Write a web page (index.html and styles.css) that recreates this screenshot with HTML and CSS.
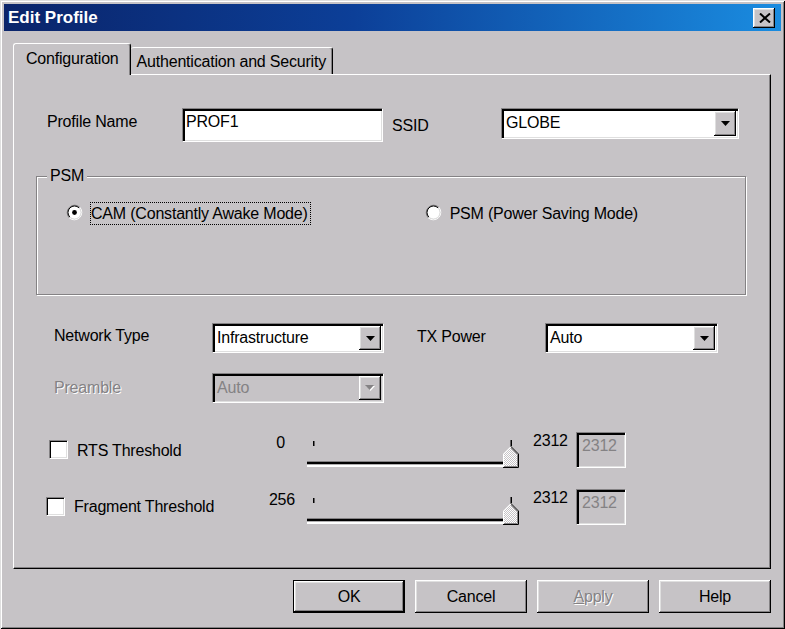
FILE: index.html
```html
<!DOCTYPE html>
<html>
<head>
<meta charset="utf-8">
<title>Edit Profile</title>
<link rel="stylesheet" href="styles.css">
</head>
<body>
<div class="window">
  <div class="titlebar">
    <span class="title">Edit Profile</span>
    <div class="close-btn">
      <svg width="12" height="10" viewBox="0 0 12 10"><path d="M1,0.5 L11,9.5 M11,0.5 L1,9.5" stroke="#000" stroke-width="2" fill="none"/></svg>
    </div>
  </div>
  <div class="client">
    <div class="tabs">
      <div class="tab tab-active">Configuration</div>
      <div class="tab tab-auth">Authentication and Security</div>
    </div>
    <div class="panel">
      <div class="row row-profile">
        <span class="lbl lbl-profile">Profile Name</span>
        <div class="field field-text">PROF1</div>
        <span class="lbl lbl-ssid">SSID</span>
        <div class="field combo combo-ssid">
          <span class="combo-text">GLOBE</span>
          <span class="combo-btn"><svg width="9" height="5" viewBox="0 0 9 5"><polygon points="0,0 9,0 4.5,5" fill="#000"/></svg></span>
        </div>
      </div>

      <fieldset class="group">
        <legend class="group-title">PSM</legend>
        <div class="radios">
          <div class="radio-item">
            <svg class="radio" width="17" height="17" viewBox="0 0 17 17">
              <circle cx="8.5" cy="8.5" r="6.5" fill="#fff"/>
              <path d="M3.2,13.8 A7.5,7.5 0 0 1 13.8,3.2" stroke="#848284" fill="none"/>
              <path d="M13.8,3.2 A7.5,7.5 0 0 1 3.2,13.8" stroke="#fff" fill="none"/>
              <path d="M3.9,13.1 A6.5,6.5 0 0 1 13.1,3.9" stroke="#000" fill="none"/>
              <path d="M13.1,3.9 A6.5,6.5 0 0 1 3.9,13.1" stroke="#dfdfdf" fill="none"/>
              <circle cx="8.5" cy="8.5" r="2.4" fill="#000"/>
            </svg>
            <span class="radio-label focus">CAM (Constantly Awake Mode)</span>
          </div>
          <div class="radio-item radio-psm">
            <svg class="radio" width="17" height="17" viewBox="0 0 17 17">
              <circle cx="8.5" cy="8.5" r="6.5" fill="#fff"/>
              <path d="M3.2,13.8 A7.5,7.5 0 0 1 13.8,3.2" stroke="#848284" fill="none"/>
              <path d="M13.8,3.2 A7.5,7.5 0 0 1 3.2,13.8" stroke="#fff" fill="none"/>
              <path d="M3.9,13.1 A6.5,6.5 0 0 1 13.1,3.9" stroke="#000" fill="none"/>
              <path d="M13.1,3.9 A6.5,6.5 0 0 1 3.9,13.1" stroke="#dfdfdf" fill="none"/>
            </svg>
            <span class="radio-label">PSM (Power Saving Mode)</span>
          </div>
        </div>
      </fieldset>

      <div class="row row-network">
        <span class="lbl lbl-network">Network Type</span>
        <div class="field combo combo-net">
          <span class="combo-text">Infrastructure</span>
          <span class="combo-btn"><svg width="9" height="5" viewBox="0 0 9 5"><polygon points="0,0 9,0 4.5,5" fill="#000"/></svg></span>
        </div>
        <span class="lbl lbl-tx">TX Power</span>
        <div class="field combo combo-tx">
          <span class="combo-text">Auto</span>
          <span class="combo-btn"><svg width="9" height="5" viewBox="0 0 9 5"><polygon points="0,0 9,0 4.5,5" fill="#000"/></svg></span>
        </div>
      </div>

      <div class="row row-preamble">
        <span class="lbl lbl-network lbl-disabled">Preamble</span>
        <div class="field combo combo-net combo-disabled">
          <span class="combo-text">Auto</span>
          <span class="combo-btn"><svg width="10" height="6" viewBox="0 0 10 6"><polygon points="1,1 10,1 5.5,6" fill="#fff"/><polygon points="0,0 9,0 4.5,5" fill="#848284"/></svg></span>
        </div>
      </div>

      <div class="row row-slider row-rts">
        <span class="chk"></span>
        <span class="lbl chk-label">RTS Threshold</span>
        <span class="lbl min-label">0</span>
        <svg class="slider" width="212" height="28" viewBox="0 0 212 28">
          <defs>
            <pattern id="dither1" width="2" height="2" patternUnits="userSpaceOnUse">
              <rect width="2" height="2" fill="#c6c3c6"/><rect width="1" height="1" fill="#fff"/><rect x="1" y="1" width="1" height="1" fill="#fff"/>
            </pattern>
          </defs>
          <rect x="6" y="1" width="1.5" height="5" fill="#000"/>
          <rect x="203.5" y="0" width="1.5" height="7" fill="#000"/>
          <rect x="0" y="21" width="200" height="1" fill="#848284"/>
          <rect x="0" y="22" width="200" height="2.5" fill="#000"/>
          <rect x="0" y="24.5" width="200" height="2.5" fill="#fff"/>
          <polygon points="196,14 204,6 212,14 212,28 196,28" fill="url(#dither1)"/>
          <polyline points="196.5,28 196.5,14 204,6.5" stroke="#fff" fill="none"/>
          <polyline points="204,6.5 211.5,14 211.5,27.5 196,27.5" stroke="#000" fill="none"/>
          <polyline points="204,8.2 210.5,14.5 210.5,26.5 197,26.5" stroke="#848284" fill="none"/>
        </svg>
        <span class="lbl max-label">2312</span>
        <div class="field field-dis">2312</div>
      </div>

      <div class="row row-slider row-frag">
        <span class="chk"></span>
        <span class="lbl chk-label">Fragment Threshold</span>
        <span class="lbl min-label">256</span>
        <svg class="slider" width="212" height="28" viewBox="0 0 212 28">
          <defs>
            <pattern id="dither2" width="2" height="2" patternUnits="userSpaceOnUse">
              <rect width="2" height="2" fill="#c6c3c6"/><rect width="1" height="1" fill="#fff"/><rect x="1" y="1" width="1" height="1" fill="#fff"/>
            </pattern>
          </defs>
          <rect x="6" y="1" width="1.5" height="5" fill="#000"/>
          <rect x="203.5" y="0" width="1.5" height="7" fill="#000"/>
          <rect x="0" y="21" width="200" height="1" fill="#848284"/>
          <rect x="0" y="22" width="200" height="2.5" fill="#000"/>
          <rect x="0" y="24.5" width="200" height="2.5" fill="#fff"/>
          <polygon points="196,14 204,6 212,14 212,28 196,28" fill="url(#dither2)"/>
          <polyline points="196.5,28 196.5,14 204,6.5" stroke="#fff" fill="none"/>
          <polyline points="204,6.5 211.5,14 211.5,27.5 196,27.5" stroke="#000" fill="none"/>
          <polyline points="204,8.2 210.5,14.5 210.5,26.5 197,26.5" stroke="#848284" fill="none"/>
        </svg>
        <span class="lbl max-label">2312</span>
        <div class="field field-dis">2312</div>
      </div>
    </div>

    <div class="buttons">
      <div class="btn btn-default">OK</div>
      <div class="btn">Cancel</div>
      <div class="btn btn-disabled"><span><u>A</u>pply</span></div>
      <div class="btn">Help</div>
    </div>
  </div>
</div>
</body>
</html>
```

FILE: styles.css
```css
html, body {
  margin: 0;
  padding: 0;
}

body {
  width: 785px;
  height: 629px;
  overflow: hidden;
  background: #c6c3c6;
  font-family: "Liberation Sans", Arial, sans-serif;
  font-size: 16px;
  letter-spacing: -0.2px;
  line-height: 18px;
  color: #000;
}

.window {
  width: 785px;
  height: 629px;
  box-sizing: border-box;
  padding: 4px;
  background: #c6c3c6;
  box-shadow: inset 1px 1px 0 #dfdfdf, inset -1px -1px 0 #000, inset 2px 2px 0 #fff, inset -2px -2px 0 #848284;
  display: flex;
  flex-direction: column;
}

/* title bar */
.titlebar {
  height: 27px;
  flex: none;
  display: flex;
  align-items: center;
  justify-content: space-between;
  padding: 0 6px 0 4px;
  background: linear-gradient(90deg, #0a246a 0%, #0c3f98 45%, #1a8ce0 100%);
}

.title {
  color: #fff;
  font-weight: bold;
  font-size: 17px;
  letter-spacing: 0;
}

.close-btn {
  width: 22px;
  height: 20px;
  box-sizing: border-box;
  background: #c6c3c6;
  box-shadow: inset -1px -1px 0 #000, inset 1px 1px 0 #fff, inset -2px -2px 0 #848284, inset 2px 2px 0 #dfdfdf;
  display: flex;
  align-items: center;
  justify-content: center;
  padding-left: 2px;
}

.close-btn svg {
  display: block;
}

/* client */
.client {
  flex: 1;
  padding: 12px 10px 0 9px;
}

.tabs {
  display: flex;
  align-items: flex-end;
  height: 31px;
}

.tab {
  box-sizing: border-box;
  background: #c6c3c6;
  border-top: 1px solid #fff;
  border-right: 1px solid #000;
  box-shadow: inset -1px 0 0 #848284;
  border-radius: 3px 3px 0 0;
  white-space: nowrap;
}

.tab-active {
  position: relative;
  z-index: 1;
  height: 32px;
  margin-bottom: -1px;
  padding: 6px 11px 0 12px;
  border-left: 1px solid #fff;
}

.tab-auth {
  height: 27px;
  padding: 5px 6px 0 6px;
}

.panel {
  height: 495px;
  box-sizing: border-box;
  border: 1px solid;
  border-color: #fff #000 #000 #fff;
  box-shadow: inset -1px -1px 0 #848284;
}

.row {
  display: flex;
  align-items: flex-start;
}

.row > * {
  flex: none;
}

.lbl {
  box-sizing: border-box;
  white-space: nowrap;
}

/* sunken fields */
.field {
  box-sizing: border-box;
  background: #fff;
  border: 1px solid;
  border-color: #848284 #fff #fff #848284;
  box-shadow: inset 2px 2px 0 #000, inset -1px -1px 0 #dfdfdf;
}

.row-profile {
  margin-top: 33px;
  padding-left: 33px;
}

.lbl-profile {
  width: 135px;
  padding-top: 5px;
}

.field-text {
  width: 201px;
  height: 34px;
  padding: 4px 0 0 3px;
}

.lbl-ssid {
  width: 118px;
  padding: 9px 0 0 9px;
}

.combo {
  display: flex;
  align-items: flex-start;
  justify-content: space-between;
}

.combo-text {
  padding-left: 4px;
  align-self: center;
  padding-bottom: 1px;
}

.combo-btn {
  width: 22px;
  box-sizing: border-box;
  margin: 2px 2px 0 0;
  background: #c6c3c6;
  box-shadow: inset -1px -1px 0 #000, inset 1px 1px 0 #fff, inset -2px -2px 0 #848284, inset 2px 2px 0 #dfdfdf;
  display: flex;
  align-items: center;
  justify-content: center;
}

.combo-btn svg {
  display: block;
}

.combo-ssid {
  width: 238px;
  height: 31px;
}

.combo-ssid .combo-btn {
  height: 25px;
}

/* group */
.group {
  box-sizing: border-box;
  margin: 25px 0 0 22px;
  width: 710px;
  height: 128px;
  padding: 0;
  border: 1px solid #848284;
  box-shadow: inset 1px 1px 0 #fff, 1px 1px 0 #fff;
}

.group-title {
  margin-left: 10px;
  padding: 0 3px;
  background: #c6c3c6;
  line-height: 18px;
}

.radios {
  display: flex;
  margin-top: 17px;
  padding-left: 29px;
}

.radio-item {
  display: flex;
  align-items: flex-start;
}

.radio {
  display: block;
  margin-top: 2px;
  margin-right: 7px;
}

.radio-label {
  line-height: 21px;
  border: 1px solid transparent;
  padding: 0 2px 0 0;
  white-space: nowrap;
}

.radio-label.focus {
  border: 1px dotted #000;
}

.radio-psm {
  margin-left: 114px;
}

/* network rows */
.row-network {
  margin-top: 28px;
  padding-left: 40px;
}

.lbl-network {
  width: 158px;
  padding-top: 4px;
}

.combo-net {
  width: 172px;
  height: 30px;
}

.combo-net .combo-btn,
.combo-tx .combo-btn {
  height: 24px;
}

.lbl-tx {
  width: 128px;
  margin-left: 33px;
  padding-top: 5px;
}

.combo-tx {
  width: 173px;
  height: 30px;
}

.row-preamble {
  margin-top: 20px;
  padding-left: 40px;
}

.lbl-disabled {
  color: #848284;
  text-shadow: 1px 1px 0 #fff;
  padding-top: 6px;
}

.combo-disabled {
  background: #c6c3c6;
}

.combo-disabled .combo-text {
  color: #848284;
}

/* slider rows */
.chk {
  width: 19px;
  height: 19px;
  box-sizing: border-box;
  margin-top: 8px;
  background: #fff;
  border: 1px solid;
  border-color: #848284 #fff #fff #848284;
  box-shadow: inset 1px 1px 0 #000, inset -1px -1px 0 #dfdfdf;
}

.chk-label {
  margin-left: 9px;
}

.min-label {
  width: 35px;
  text-align: right;
  margin-top: 2px;
}

.slider {
  display: block;
  margin-left: 12px;
  margin-top: 8px;
}

.max-label {
  width: 43px;
  margin-left: 14px;
}

.field-dis {
  width: 50px;
  height: 36px;
  background: #c6c3c6;
  color: #848284;
  padding: 4px 0 0 5px;
}

.row-rts {
  margin-top: 29px;
}

.row-rts .chk {
  margin-left: 35px;
}

.row-rts .chk-label {
  width: 183px;
  margin-top: 10px;
}

.row-rts .min-label {
  padding-right: 10px;
}

.row-frag {
  margin-top: 21px;
}

.row-frag .chk {
  margin-left: 32px;
}

.row-frag .chk-label {
  width: 186px;
  margin-top: 9px;
}

/* buttons */
.buttons {
  display: flex;
  justify-content: flex-end;
  gap: 10px;
  margin-top: 11px;
}

.btn {
  width: 112px;
  height: 33px;
  box-sizing: border-box;
  display: flex;
  align-items: center;
  justify-content: center;
  background: #c6c3c6;
  box-shadow: inset -1px -1px 0 #000, inset 1px 1px 0 #fff, inset -2px -2px 0 #848284, inset 2px 2px 0 #dfdfdf;
}

.btn-default {
  border: 1px solid #000;
}

.btn-disabled {
  color: #848284;
  text-shadow: 1px 1px 0 #fff;
}
```
